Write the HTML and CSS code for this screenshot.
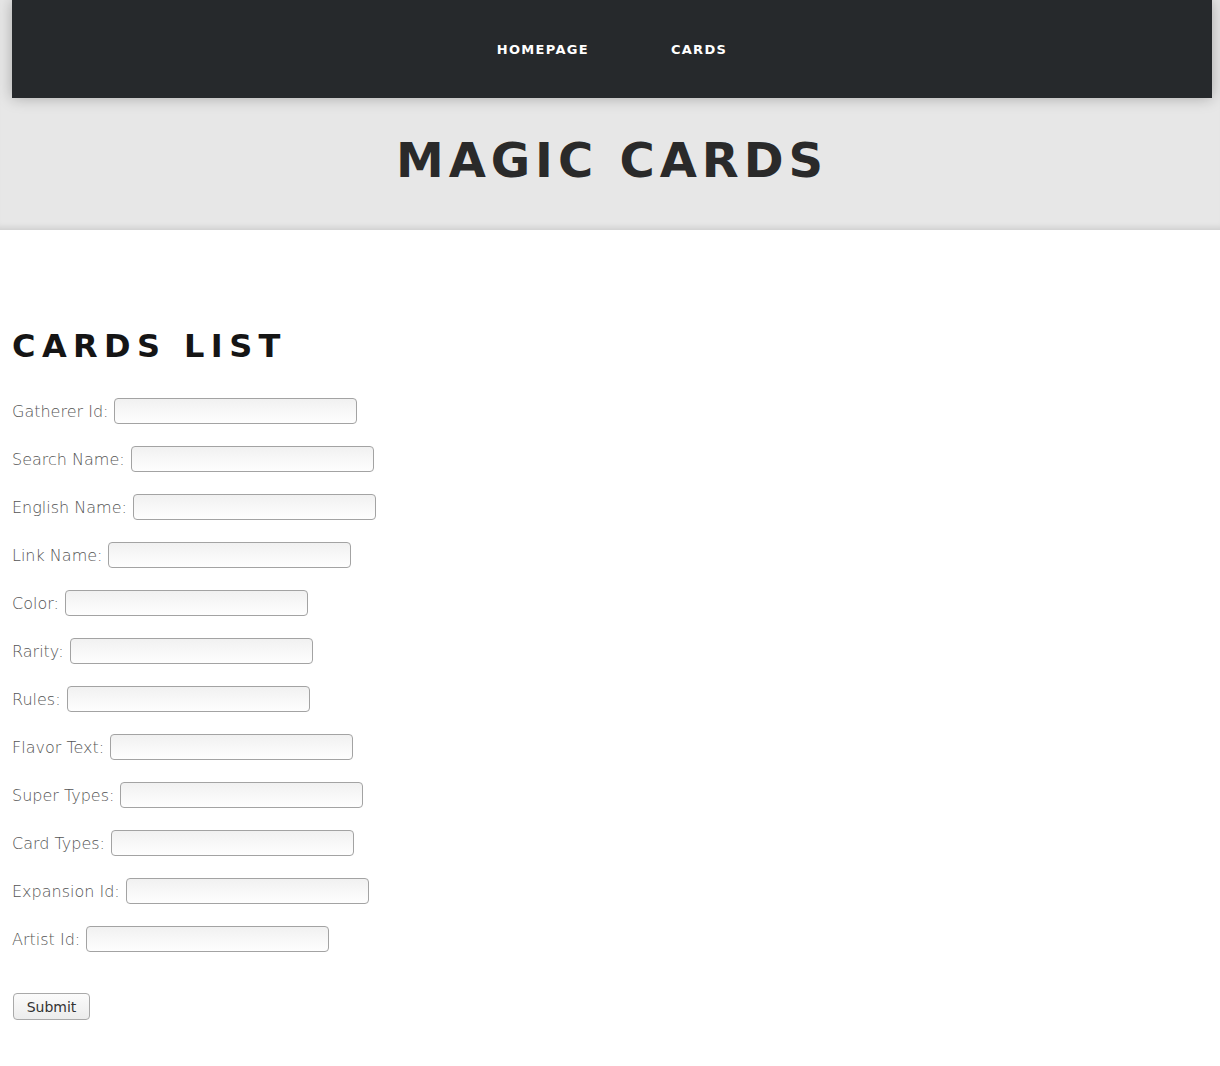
FILE: index.html
```html
<!DOCTYPE html>
<html lang="en">
<head>
<meta charset="utf-8">
<title>Magic Cards</title>
<link rel="stylesheet" href="styles.css">
</head>
<body>
<header class="site-header">
  <nav class="topnav">
    <a class="topnav-link" href="#">Homepage</a>
    <a class="topnav-link" href="#">Cards</a>
  </nav>
  <h1 class="site-title">Magic Cards</h1>
</header>
<main class="content">
  <h2 class="page-title">Cards List</h2>
  <form class="search-form">
    <div class="field"><label for="f1">Gatherer Id:</label><input id="f1" type="text"></div>
    <div class="field"><label for="f2">Search Name:</label><input id="f2" type="text"></div>
    <div class="field"><label for="f3">English Name:</label><input id="f3" type="text"></div>
    <div class="field"><label for="f4">Link Name:</label><input id="f4" type="text"></div>
    <div class="field"><label for="f5">Color:</label><input id="f5" type="text"></div>
    <div class="field"><label for="f6">Rarity:</label><input id="f6" type="text"></div>
    <div class="field"><label for="f7">Rules:</label><input id="f7" type="text"></div>
    <div class="field"><label for="f8">Flavor Text:</label><input id="f8" type="text"></div>
    <div class="field"><label for="f9">Super Types:</label><input id="f9" type="text"></div>
    <div class="field"><label for="f10">Card Types:</label><input id="f10" type="text"></div>
    <div class="field"><label for="f11">Expansion Id:</label><input id="f11" type="text"></div>
    <div class="field"><label for="f12">Artist Id:</label><input id="f12" type="text"></div>
    <div class="actions"><button type="submit" class="submit-btn">Submit</button></div>
  </form>
</main>
</body>
</html>
```
FILE: styles.css
```css
html, body {
  margin: 0;
  padding: 0;
  background: #fff;
  font-family: "DejaVu Sans", Verdana, sans-serif;
}

.site-header {
  background: #e7e7e7;
  padding: 0 8px 0 12px;
  box-shadow: inset 0 -7px 6px -5px rgba(0,0,0,0.12);
  height: 230px;
  box-sizing: border-box;
}

.topnav {
  height: 98px;
  background: #26292c;
  display: flex;
  justify-content: center;
  align-items: center;
  gap: 82px;
  box-shadow: 0 0 14px rgba(0,0,0,0.28);
}

.topnav-link {
  color: #fff;
  text-decoration: none;
  text-transform: uppercase;
  font-weight: bold;
  font-size: 13px;
  letter-spacing: 1.3px;
}

.site-title {
  margin: 34px 0 0;
  line-height: 56px;
  font-size: 48px;
  font-weight: bold;
  text-transform: uppercase;
  letter-spacing: 4.9px;
  color: #2a2a2a;
  text-align: center;
}

.content {
  padding: 0 12px;
}

.page-title {
  margin: 97px 0 0;
  line-height: 38px;
  font-size: 32px;
  font-weight: bold;
  text-transform: uppercase;
  letter-spacing: 6.4px;
  color: #151515;
}

.search-form {
  margin-top: 33px;
  display: flex;
  flex-direction: column;
  align-items: flex-start;
  gap: 22px;
}

.field {
  display: flex;
  align-items: center;
  height: 26px;
}

.field label {
  font-size: 16px;
  font-weight: 200;
  color: #555;
  margin-right: 6px;
}

.field input {
  width: 243px;
  height: 26px;
  box-sizing: border-box;
  border: 1px solid #a3a3a3;
  border-radius: 4px;
  background: linear-gradient(#f1f1f1, #fefefe);
  margin: 0;
  padding: 2px 4px;
  font-family: inherit;
}

.actions {
  margin-top: 19px;
  padding-left: 1px;
}

.submit-btn {
  width: 77px;
  height: 27px;
  border: 1px solid #a9a9a9;
  border-radius: 4px;
  background: linear-gradient(#fbfbfb, #ececec);
  font-family: "DejaVu Sans", sans-serif;
  font-size: 14px;
  color: #333;
  padding: 0;
  margin: 0;
}
```
